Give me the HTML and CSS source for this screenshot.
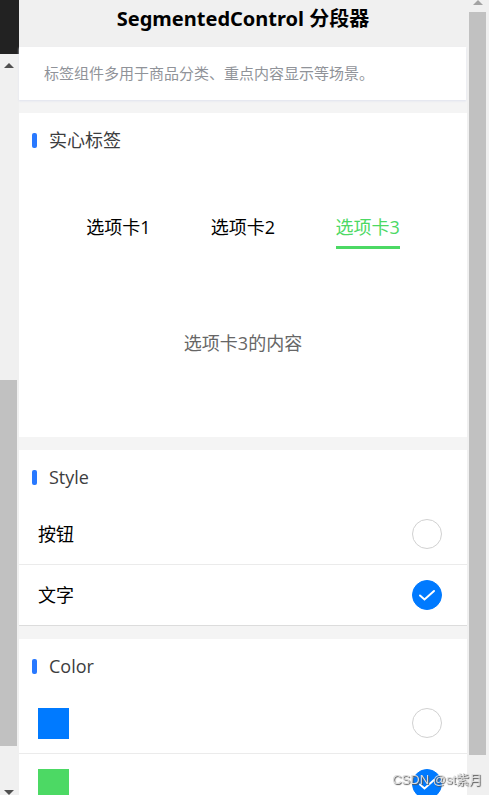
FILE: index.html
```html
<!DOCTYPE html>
<html lang="zh-CN">
<head>
    <meta charset="UTF-8">
    <meta name="viewport" content="width=device-width, initial-scale=1.0">
    <title>SegmentedControl 分段器</title>
    <link rel="stylesheet" href="styles.css">
</head>
<body>
    <div class="window">
        <div class="side">
            <div class="side-dark"></div>
            <div class="scrollbar scrollbar-left">
                <span class="arrow arrow-up"></span>
                <div class="thumb"></div>
                <span class="arrow arrow-down"></span>
            </div>
        </div>

        <main class="page">
            <h1>SegmentedControl 分段器</h1>
            <p class="intro">标签组件多用于商品分类、重点内容显示等场景。</p>

            <section class="card">
                <h2>实心标签</h2>
                <div class="tabs">
                    <div class="tab"><button type="button">选项卡1</button></div>
                    <div class="tab"><button type="button">选项卡2</button></div>
                    <div class="tab"><button type="button" class="active">选项卡3</button></div>
                </div>
                <div class="content">选项卡3的内容</div>
            </section>

            <section class="card">
                <h2>Style</h2>
                <label class="row">
                    <span>按钮</span>
                    <input type="radio" name="style" value="button">
                    <svg class="radio" viewBox="0 0 28 28"><path d="M7 14.500L11.500 18.500L21 10"/></svg>
                </label>
                <label class="row">
                    <span>文字</span>
                    <input type="radio" name="style" value="text" checked>
                    <svg class="radio" viewBox="0 0 28 28"><path d="M7 14.500L11.500 18.500L21 10"/></svg>
                </label>
            </section>

            <section class="card">
                <h2>Color</h2>
                <label class="row">
                    <span class="swatch blue"></span>
                    <input type="radio" name="color" value="#007aff" aria-label="#007aff">
                    <svg class="radio" viewBox="0 0 28 28"><path d="M7 14.500L11.500 18.500L21 10"/></svg>
                </label>
                <label class="row">
                    <span class="swatch green"></span>
                    <input type="radio" name="color" value="#4cd964" aria-label="#4cd964" checked>
                    <svg class="radio" viewBox="0 0 28 28"><path d="M7 14.500L11.500 18.500L21 10"/></svg>
                </label>
            </section>
        </main>

        <div class="scrollbar scrollbar-right">
            <span class="arrow arrow-up"></span>
            <div class="thumb"></div>
        </div>
    </div>
    <div class="watermark">CSDN @st紫月</div>
</body>
</html>
```

FILE: styles.css
```css
* {
    box-sizing: border-box;
}
body {
    margin: 0;
    background-color: #fff;
    color: #000;
    font-family: "Open Sans", "Noto Sans CJK SC", sans-serif;
    font-size: 18px;
    line-height: 24px;
}
.window {
    display: flex;
    height: 100vh;
    padding-right: 5px;
    overflow: hidden;
}

/* scrollbars */
.side {
    display: flex;
    flex-direction: column;
    flex: none;
    width: 19px;
    background-color: #f0f0f0;
}
.side-dark {
    height: 54px;
    background-color: #222;
}
.scrollbar {
    display: flex;
    flex-direction: column;
    background-color: #f0f0f0;
}
.scrollbar-left {
    flex: 1;
    width: 17px;
    padding-top: 9px;
}
.scrollbar-right {
    flex: none;
    width: 22px;
    padding: 0 3px 40px 2px;
}
.thumb {
    flex: 1;
    background-color: #c1c1c1;
}
.scrollbar-left .thumb {
    margin: 312px 0 44px;
}
.scrollbar-right .thumb {
    margin-top: 7px;
}
.arrow {
    align-self: center;
    border: 0 solid transparent;
    border-width: 0 5px;
}
.arrow-up {
    border-bottom: 5px solid #505050;
}
.arrow-down {
    border-top: 5px solid #505050;
}
.scrollbar-right .arrow-up {
    border-bottom-color: #a3a3a3;
}

/* page */
.page {
    flex: 1;
    min-width: 0;
    background-color: #f4f4f4;
}
h1 {
    height: 47px;
    margin: 0;
    padding-top: 7px;
    background-color: #f0f0f0;
    font-family: "Noto Sans", "Noto Sans CJK SC", sans-serif;
    font-size: 20px;
    font-weight: bold;
    text-align: center;
}
.intro {
    margin: 0 1px 13px 0;
    padding: 14px 25px 15px;
    background-color: #fff;
    box-shadow: 0 1px 2px #dfe2ee;
    color: #909399;
    font-size: 15px;
    white-space: nowrap;
}
.card {
    margin-bottom: 13px;
    background-color: #fff;
}
h2 {
    display: flex;
    align-items: center;
    gap: 12px;
    height: 54px;
    margin: 0;
    padding-left: 13px;
    color: #3c3d40;
    font-size: 18px;
    font-weight: normal;
}
h2::before {
    content: "";
    width: 5px;
    height: 15px;
    border-radius: 2px;
    background-color: #2979ff;
}
.tabs {
    display: flex;
    padding: 45px 37px 0;
}
.tab {
    flex: 1;
    text-align: center;
}
.tab button {
    padding: 3px 0 7px;
    border: 0;
    border-bottom: 3px solid transparent;
    background: none;
    color: #000;
    font: inherit;
    cursor: pointer;
}
.tab .active {
    border-color: #4cd964;
    color: #4cd964;
}
.content {
    padding: 82px 0;
    color: #666;
    text-align: center;
}

.row {
    display: flex;
    align-items: center;
    justify-content: space-between;
    height: 61px;
    padding: 0 25px 0 19px;
    border-bottom: 1px solid #ebebeb;
    cursor: pointer;
}
.row:last-child {
    border-color: #dcdcdc;
}
.row input {
    position: absolute;
    opacity: 0;
}
.radio {
    width: 30px;
    height: 30px;
    border: 1px solid #d1d1d1;
    border-radius: 50%;
}
.radio path {
    fill: none;
    stroke: none;
    stroke-width: 2;
    stroke-linecap: round;
}
.row input:checked + .radio {
    border-color: #007aff;
    background-color: #007aff;
}
.row input:checked + .radio path {
    stroke: #fff;
}
.swatch {
    width: 31px;
    height: 31px;
}
.blue {
    background-color: #007aff;
}
.green {
    background-color: #4cd964;
}

.watermark {
    position: fixed;
    right: 12px;
    bottom: 3px;
    color: #ddd;
    font-family: "Liberation Sans", "Noto Sans CJK SC", sans-serif;
    font-size: 13px;
    text-shadow: 1px 1px 1px #555;
}
```
